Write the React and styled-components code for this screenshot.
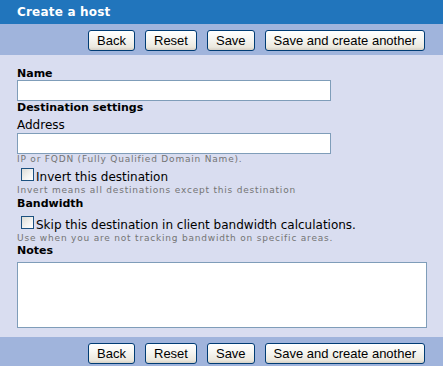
import React from "react";
import styled, { createGlobalStyle } from "styled-components";

const Global = createGlobalStyle`
  html, body { margin: 0; padding: 0; background: #d9ddf0; }
  body { font-family: "DejaVu Sans", Verdana, sans-serif; }
`;

const Page = styled.div`
  width: 100%;
  background: #d9ddf0;
`;

const Header = styled.div`
  height: 24px;
  background: #2175bc;
  color: #fff;
  font: bold 12px/24px "DejaVu Sans", Verdana, sans-serif;
  letter-spacing: 0.2px;
  padding-left: 17px;
`;

const Toolbar = styled.div`
  display: flex;
  justify-content: flex-end;
  align-items: flex-start;
  gap: 10px;
  height: 31px;
  box-sizing: border-box;
  padding: 6px 18px 0 0;
  background: #a0b4dc;
`;

const Button = styled.button`
  height: 21px;
  box-sizing: border-box;
  padding: 0 8px;
  border: 1px solid #003c74;
  border-radius: 3px;
  background: linear-gradient(#ffffff 0%, #f7f7f3 40%, #ebe8de 85%, #d6d0c5 100%);
  color: #000;
  font: 13px/19px "Liberation Sans", Arial, sans-serif;
  cursor: pointer;
`;

const Body = styled.div`
  padding: 12px 16px 9px 17px;
  display: flex;
  flex-direction: column;
  align-items: flex-start;
`;

const Heading = styled.div`
  font: bold 11px/13px "DejaVu Sans", Verdana, sans-serif;
  color: #000;
  margin-top: ${(p) => p.$mt || 0}px;
`;

const Label = styled.div`
  font: 12px/15px "DejaVu Sans", Verdana, sans-serif;
  color: #000;
  margin-top: ${(p) => p.$mt || 0}px;
`;

const TextInput = styled.input`
  display: block;
  width: 314px;
  height: 21px;
  box-sizing: border-box;
  margin: 0;
  border: 1px solid #7f9db9;
  background: #fff;
  padding: 1px 3px;
  font: 12px "DejaVu Sans", Verdana, sans-serif;
`;

const Help = styled.div`
  font: 9px/11px "DejaVu Sans", Verdana, sans-serif;
  letter-spacing: 0.8px;
  color: #747474;
`;

const CheckRow = styled.label`
  display: flex;
  align-items: flex-start;
  margin-top: ${(p) => p.$mt || 0}px;
  font: 12px/15px "DejaVu Sans", Verdana, sans-serif;
  color: #000;
`;

const Check = styled.input`
  appearance: none;
  -webkit-appearance: none;
  width: 13px;
  height: 13px;
  box-sizing: border-box;
  margin: 3px 2px 0 4px;
  border: 1px solid #1c5180;
  background: linear-gradient(135deg, #dcdcd7 0%, #f4f4f2 60%, #ffffff 100%);
  flex: none;
`;

const CheckText = styled.span`
  margin-top: 5px;
`;

const Notes = styled.textarea`
  display: block;
  width: 410px;
  height: 66px;
  box-sizing: border-box;
  margin: 5px 0 0 0;
  border: 1px solid #7f9db9;
  background: #fff;
  resize: none;
  font: 12px "DejaVu Sans", Verdana, sans-serif;
`;

const Actions = () => (
  <Toolbar>
    <Button type="button">Back</Button>
    <Button type="button">Reset</Button>
    <Button type="button">Save</Button>
    <Button type="button">Save and create another</Button>
  </Toolbar>
);

export default function App() {
  return (
    <Page>
      <Global />
      <Header>Create a host</Header>
      <Actions />
      <Body>
        <Heading>Name</Heading>
        <TextInput type="text" />
        <Heading>Destination settings</Heading>
        <Label $mt={4}>Address</Label>
        <TextInput type="text" />
        <Help>IP or FQDN (Fully Qualified Domain Name).</Help>
        <CheckRow>
          <Check type="checkbox" />
          <CheckText>Invert this destination</CheckText>
        </CheckRow>
        <Help>Invert means all destinations except this destination</Help>
        <Heading $mt={1}>Bandwidth</Heading>
        <CheckRow $mt={3}>
          <Check type="checkbox" />
          <CheckText>Skip this destination in client bandwidth calculations.</CheckText>
        </CheckRow>
        <Help>Use when you are not tracking bandwidth on specific areas.</Help>
        <Heading>Notes</Heading>
        <Notes />
      </Body>
      <Actions />
    </Page>
  );
}
